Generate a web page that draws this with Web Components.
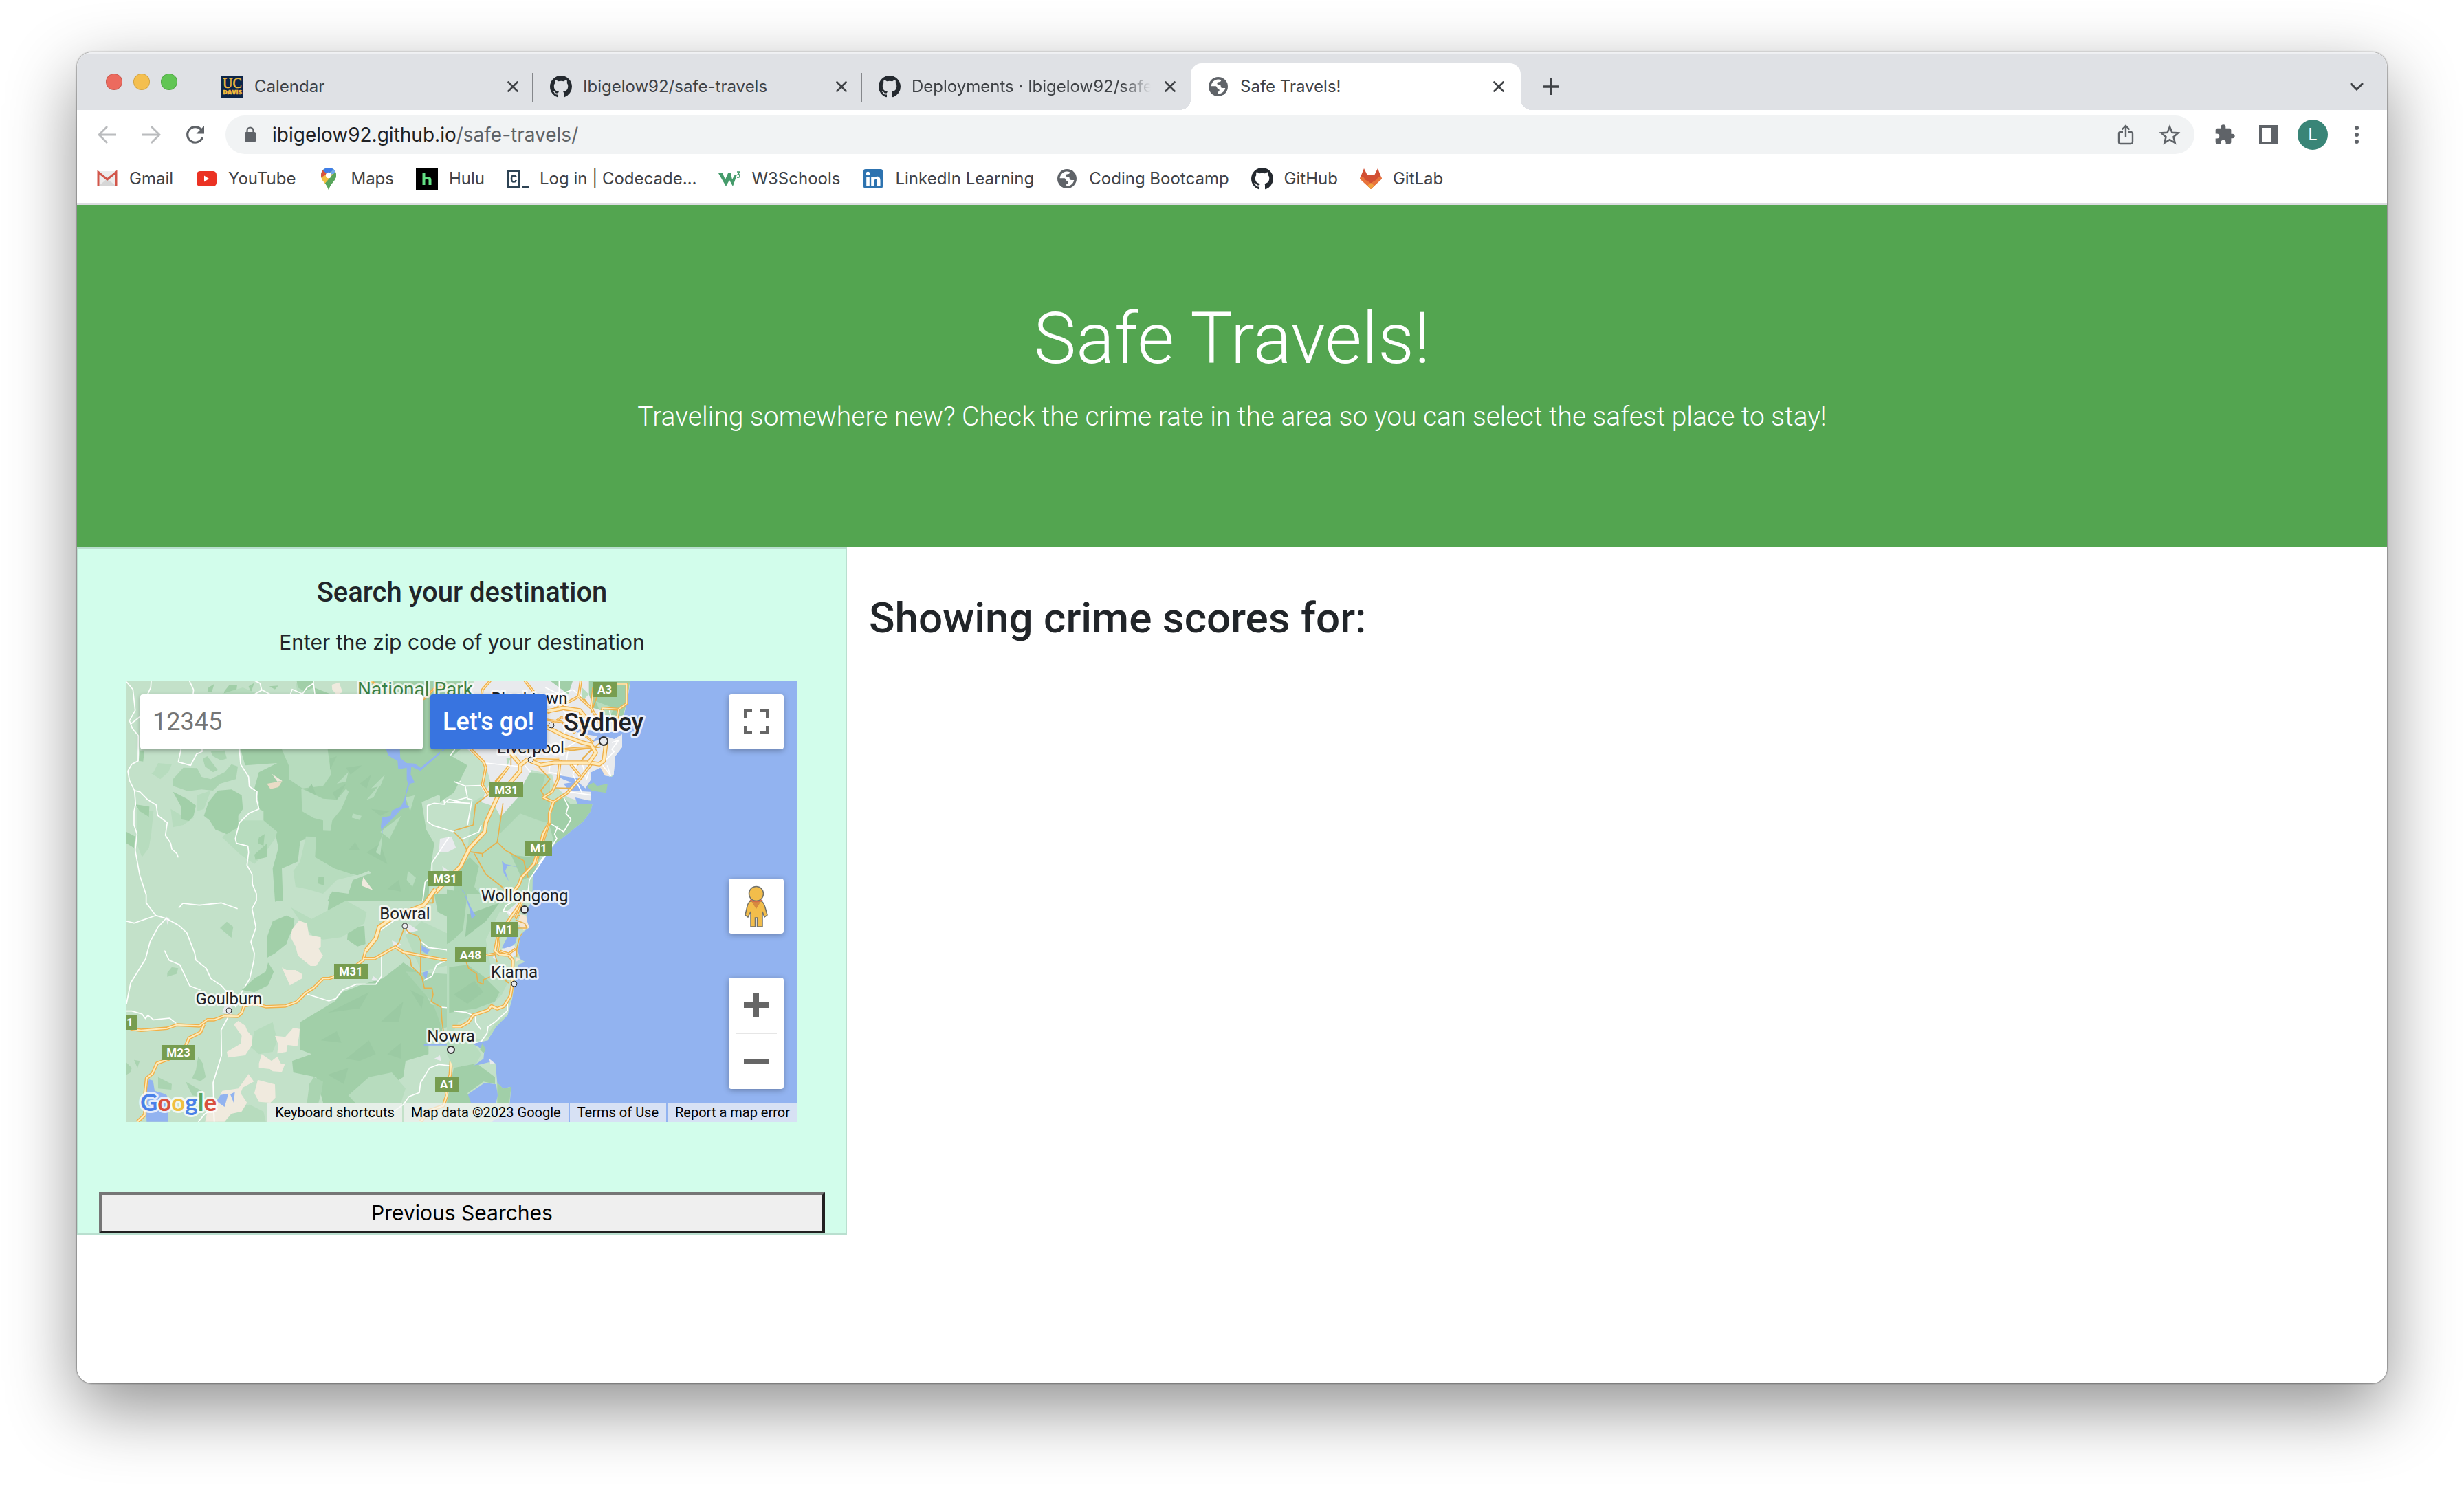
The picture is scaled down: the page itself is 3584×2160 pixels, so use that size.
<!DOCTYPE html>
<html lang="en">
<head>
<meta charset="utf-8">
<title>Safe Travels!</title>
<style>
  html, body { margin: 0; background: #fff; }
  body { box-sizing: border-box; min-height: 100vh; padding: 76px 112px 148px; display: flex; font-family: Inter, "Liberation Sans", sans-serif; color: #212529; }
</style>
</head>
<body>
<browser-window>
  <tab-strip slot="tabs">
    <browser-tab icon="davis">Calendar</browser-tab>
    <browser-tab icon="github">Ibigelow92/safe-travels</browser-tab>
    <browser-tab icon="github" last>Deployments · Ibigelow92/safe-travels</browser-tab>
    <browser-tab icon="globe" active>Safe Travels!</browser-tab>
  </tab-strip>
  <address-bar slot="toolbar" host="ibigelow92.github.io" path="/safe-travels/"></address-bar>
  <bookmark-bar slot="bookmarks">
    <bookmark-link icon="gmail">Gmail</bookmark-link>
    <bookmark-link icon="youtube">YouTube</bookmark-link>
    <bookmark-link icon="maps">Maps</bookmark-link>
    <bookmark-link icon="hulu">Hulu</bookmark-link>
    <bookmark-link icon="codecademy">Log in | Codecade…</bookmark-link>
    <bookmark-link icon="w3">W3Schools</bookmark-link>
    <bookmark-link icon="linkedin">LinkedIn Learning</bookmark-link>
    <bookmark-link icon="globe">Coding Bootcamp</bookmark-link>
    <bookmark-link icon="github">GitHub</bookmark-link>
    <bookmark-link icon="gitlab">GitLab</bookmark-link>
  </bookmark-bar>
  <site-hero>
    <span slot="title">Safe Travels!</span>
    Traveling somewhere new? Check the crime rate in the area so you can select the safest place to stay!
  </site-hero>
  <page-columns>
    <search-panel slot="side"><area-map></area-map></search-panel>
    <crime-results>Showing crime scores for:</crime-results>
  </page-columns>
</browser-window>

<script>
const define = (name, build) => customElements.define(name, class extends HTMLElement {
  connectedCallback() {
    if (this.shadowRoot) return;
    this.attachShadow({ mode: 'open' }).innerHTML = build(this);
  }
});

/* ---------- icons ---------- */
const octocat = '<path fill="#24292f" d="M8 0C3.58 0 0 3.58 0 8c0 3.54 2.29 6.53 5.47 7.59.4.07.55-.17.55-.38 0-.19-.01-.82-.01-1.49-2.01.37-2.53-.49-2.69-.94-.09-.23-.48-.94-.82-1.13-.28-.15-.68-.52-.01-.53.63-.01 1.08.58 1.23.82.72 1.21 1.87.87 2.33.66.07-.52.28-.87.51-1.07-1.78-.2-3.64-.89-3.64-3.95 0-.87.31-1.59.82-2.15-.08-.2-.36-1.02.08-2.12 0 0 .67-.21 2.2.82.64-.18 1.32-.27 2-.27s1.36.09 2 .27c1.53-1.04 2.2-.82 2.2-.82.44 1.1.16 1.92.08 2.12.51.56.82 1.27.82 2.15 0 3.07-1.87 3.75-3.65 3.95.29.25.54.73.54 1.48 0 1.07-.01 1.93-.01 2.2 0 .21.15.46.55.38A8.01 8.01 0 0 0 16 8c0-4.42-3.58-8-8-8z"/>';
const icons = {
  davis: ['0 0 32 32', '<rect width="32" height="32" fill="#0c2549"/><text x="16" y="18" text-anchor="middle" font-family="Liberation Serif, serif" font-size="20" fill="#f2bd3d" stroke="#f2bd3d" stroke-width=".5">UC</text><text x="16" y="27" text-anchor="middle" font-family="Open Sans, sans-serif" font-weight="800" font-size="9" fill="#f2bd3d" stroke="#f2bd3d" stroke-width=".4">DAVIS</text>'],
  github: ['0 0 16 16', octocat],
  globe: ['0 0 32 32', '<circle cx="16" cy="16" r="14" fill="#5f6368"/><path fill="#fff" d="M16 5.500c1.500 0 3 .3 4.300.9-.2 1.700-1.200 2.700-3 2.900-1.900.2-2.900.5-2.900 2.200 0 1.200.9 1.500 2.300 1.500 2.600 0 3.100 1.300 3.100 3.100 0 1.400.9 1.900 2.900 1.900h3.600C25.300 23 21.100 26.500 16 26.500l-.9-.1v-2.900c1.700-.1 2.600-.9 2.600-2.300 0-1.200-.7-1.900-2-2.200-1-.3-1.300-.8-1.500-1.700-.3-1.500-1.200-2.100-2.800-2.100H5.600C6.100 9.800 10.500 5.500 16 5.500z"/>'],
  gmail: ['0 0 32 32', '<rect x="3" y="5" width="26" height="21" fill="#ececec"/><path d="M4 26l12-10 12 10z" fill="#d6d6d6"/><path d="M3 26V6.500L16 17 29 6.500V26" fill="none" stroke="#d2564a" stroke-width="3"/>'],
  youtube: ['0 0 32 32', '<rect x="2" y="5" width="29" height="22" rx="5" fill="#eb3223"/><path d="M13 11.500v9l7-4.500z" fill="#fff"/>'],
  maps: ['0 0 32 32', '<path d="M16 0C9.500 0 5 5 5 11c0 8 8 11 11 21 3-10 11-13 11-21C27 5 22.500 0 16 0z" fill="#58a55c"/><path d="M16 0c-3.500 0-6.500 1.500-8.500 3.800L16 11l7-9C21 .8 18.800 0 16 0z" fill="#3f7de8"/><path d="M7.500 3.800A11 11 0 0 0 5 11c0 1 .2 2 .4 3L16 11z" fill="#d85140"/><path d="M5.400 14c.8 3.500 3 6 5.400 9L24.500 7 23 4z" fill="#f1bf42"/><path d="M23 2c2.600 2 4 5.500 4 9 0 8-8 11-11 21-1.200-4-3-6.600-5.200-9L24 8z" fill="#58a55c"/><path d="M23 2l-7 9 8-2.500 1.500-3.500A12 12 0 0 0 23 2z" fill="#6fa7f0"/><circle cx="16" cy="11" r="4.200" fill="#fff"/>'],
  hulu: ['0 0 32 32', '<rect width="32" height="32" fill="#000"/><path d="M11.500 7v18M11.500 25v-7c0-2 1-3 2.500-3h3.500c2 0 3 1 3 3v7" fill="none" stroke="#63e084" stroke-width="4"/>'],
  codecademy: ['0 0 32 32', '<rect x="1.500" y="4.500" width="17" height="23" fill="#fff" stroke="#2d4354" stroke-width="3"/><path d="M13.500 14c0-2-1-2.500-3.300-2.500s-3.200 1-3.200 4.500.9 4.500 3.200 4.500 3.300-.5 3.300-2.500" fill="none" stroke="#2d4354" stroke-width="2.600"/><rect x="23" y="26" width="9" height="3" fill="#2d4354"/>'],
  w3: ['0 0 32 32', '<path d="M0 8h6l4 9 4-9h4l2 9 4-7 3 0-6 17-5-9-5 9z" fill="#459b6b"/><path d="M27 6h4l-2.500 3.500c2 0 2.500 1 2.500 2.500s-1 2.500-4 2" fill="none" stroke="#459b6b" stroke-width="1.500"/>'],
  linkedin: ['0 0 32 32', '<rect x="2" y="2" width="28" height="28" rx="3" fill="#2d73b0"/><circle cx="8.500" cy="8.500" r="2.700" fill="#fff"/><path fill="#fff" d="M6.200 13h4.600v13H6.200zM13.200 13h4.300v1.900c.8-1.300 2.200-2.200 4.200-2.200 3.800 0 4.800 2.500 4.800 6V26h-4.600v-6.300c0-1.800-.4-3-2-3s-2.200 1.200-2.200 3V26h-4.500z"/>'],
  gitlab: ['0 0 32 32', '<path d="M6 1L0 16l16 15 16-15L26 1l-5 10H11z" fill="#d24f33"/><path d="M0 16l16 15L5 13H1z" fill="#e8743c"/><path d="M32 16L16 31l11-18h4z" fill="#e8743c"/><path d="M3 15l13 7 13-7-13 16z" fill="#e8743c"/><path d="M4 11l12 12L28 11 22 10H10z" fill="#d24f33"/><path d="M11 26l5-4 5 4-5 5z" fill="#f0a13f"/>'],
  close: ['0 0 16 16', '<path d="M1.500 1.500l13 13M14.500 1.500l-13 13" stroke="#3f4246" stroke-width="2.600" fill="none" stroke-linecap="round"/>'],
  plus: ['0 0 24 24', '<path d="M12 1.500v21M1.500 12h21" stroke="#3f4246" stroke-width="3.600" fill="none" stroke-linecap="round"/>'],
  chevron: ['0 0 20 12', '<path d="M2 2l8 8 8-8" stroke="#3f4246" stroke-width="3" fill="none" stroke-linecap="round"/>'],
  back: ['0 0 32 32', '<path d="M29 16H4M16 4L4 16l12 12" stroke="#babcbe" stroke-width="2.800" fill="none"/>'],
  forward: ['0 0 32 32', '<path d="M3 16h25M16 4l12 12-12 12" stroke="#babcbe" stroke-width="2.800" fill="none"/>'],
  reload: ['0 0 32 32', '<path d="M26.500 20A11.300 11.300 0 1 1 24.500 8.500" stroke="#5f6368" stroke-width="3.200" fill="none"/><path d="M29 3v11.500H17.500z" fill="#5f6368"/>'],
  lock: ['0 0 32 32', '<rect x="8" y="12" width="16" height="15" rx="2" fill="#5f6368"/><path d="M11.500 13v-3a4.500 4.500 0 0 1 9 0v3" fill="none" stroke="#5f6368" stroke-width="2.200"/>'],
  share: ['0 0 32 32', '<path d="M12 12H8.500a2.500 2.500 0 0 0-2.500 2.500v12A2.500 2.500 0 0 0 8.500 29h15a2.500 2.500 0 0 0 2.500-2.500v-12a2.500 2.500 0 0 0-2.500-2.500H20M16 20V4M10.500 8.500L16 3l5.500 5.500" fill="none" stroke="#5f6368" stroke-width="2.400"/>'],
  star: ['0 0 32 32', '<path d="M16 4.500l3.400 8.200 8.800.7-6.700 5.800 2.100 8.600-7.600-4.600-7.600 4.600 2.100-8.600-6.700-5.800 8.800-.7z" fill="none" stroke="#5f6368" stroke-width="2.600"/>'],
  puzzle: ['0 0 24 24', '<path fill="#5f6368" d="M20.500 11H19V7c0-1.100-.9-2-2-2h-4V3.500a2.500 2.500 0 0 0-5 0V5H4c-1.100 0-2 .9-2 2v3.800h1.500a2.700 2.700 0 0 1 0 5.400H2V20c0 1.100.9 2 2 2h3.800v-1.500a2.700 2.700 0 0 1 5.400 0V22H17c1.100 0 2-.9 2-2v-4h1.500a2.500 2.500 0 0 0 0-5z"/>'],
  panel: ['0 0 32 32', '<path fill="#5f6368" fill-rule="evenodd" d="M2 2h28v28H2zM6 6v20h14V6z"/>'],
  dots: ['0 0 32 32', '<g fill="#5f6368"><circle cx="16" cy="6" r="3"/><circle cx="16" cy="16" r="3"/><circle cx="16" cy="26" r="3"/></g>'],
  fullscreen: ['0 0 36 36', '<path fill="#666" d="M0 0h12v4H4v8H0zM24 0h12v12h-4V4h-8zM0 24h4v8h8v4H0zM32 24h4v12H24v-4h8z"/>'],
  zoomin: ['0 0 36 36', '<path fill="#666" d="M14 0h8v14h14v8H22v14h-8V22H0v-8h14z"/>'],
  zoomout: ['0 0 36 36', '<path fill="#666" d="M0 14h36v8H0z"/>'],
  pegman: ['0 0 36 60', '<path d="M9 23q-3 2-4.500 9L2 43l4 3 4-8v22h6.500V47h3V60H27V38l3 8 4-3-3-11q-2-7-5-9z" fill="#f2bd4b" stroke="#71716a" stroke-width="1.500"/><path d="M11 23h14l-7 11z" fill="#d68a3f"/><circle cx="18" cy="12" r="10.500" fill="#f2bd4b" stroke="#71716a" stroke-width="1.500"/><path d="M9 21q9 5 18 0" fill="none" stroke="#d2694a" stroke-width="2"/>']
};
customElements.define('ui-icon', class extends HTMLElement {
  connectedCallback() {
    if (this.shadowRoot) return;
    const [box, art] = icons[this.getAttribute('name')];
    this.attachShadow({ mode: 'open' }).innerHTML = `
      <style>:host{display:block;flex:none;width:32px;height:32px}svg{display:block;width:100%;height:100%}</style>
      <svg viewBox="${box}" aria-hidden="true">${art}</svg>`;
  }
});

const button = 'button{font:inherit;color:inherit;border:0;padding:0;margin:0;background:none;display:block;flex:none}';

/* ---------- browser frame ---------- */
define('browser-window', () => `
  <style>
    :host{display:flex;flex:1;min-width:0;border-radius:22px;box-shadow:0 0 2px 1px rgba(0,0,0,.35),0 36px 100px rgba(0,0,0,.44)}
    .frame{flex:1;min-width:0;display:flex;flex-direction:column;overflow:hidden;border-radius:22px;background:#fff}
    header{border-bottom:2px solid #dcdde1}
    main{flex:1}
  </style>
  <div class="frame">
    <header><slot name="tabs"></slot><slot name="toolbar"></slot><slot name="bookmarks"></slot></header>
    <main><slot></slot></main>
  </div>`);

define('tab-strip', () => `
  <style>
    ${button}
    :host{display:flex;align-items:flex-end;box-sizing:border-box;height:84px;background:#dfe1e5;box-shadow:inset 0 2px 1px #f0f1f3}
    .lights{display:flex;gap:16px;align-self:flex-start;box-sizing:border-box;width:186px;flex:none;padding:31px 0 0 42px}
    .lights button{width:24px;height:24px;border-radius:50%;box-shadow:inset 0 0 0 1px rgba(0,0,0,.14)}
    .new,.more{height:68px;display:flex;align-items:center}
    .new{margin-left:32px}.new ui-icon{width:24px;height:24px}
    .more{margin-left:auto;margin-right:34px}.more ui-icon{width:20px;height:12px}
  </style>
  <div class="lights">
    <button aria-label="Close window" style="background:#ec6a5e"></button>
    <button aria-label="Minimize" style="background:#f4bf4f"></button>
    <button aria-label="Zoom" style="background:#61c554"></button>
  </div>
  <slot></slot>
  <button class="new" aria-label="New tab"><ui-icon name="plus"></ui-icon></button>
  <button class="more" aria-label="Search tabs"><ui-icon name="chevron"></ui-icon></button>`);

define('browser-tab', el => `
  <style>
    ${button}
    :host{position:relative;display:flex;align-items:center;box-sizing:border-box;flex:0 1 478px;min-width:0;height:68px;padding:0 20px 0 24px;font-size:24px;line-height:32px;color:#3f4246;border-right:2px solid #85878b;border-image:linear-gradient(transparent 15px,#85878b 15px,#85878b 55px,transparent 55px) 1}
    :host([last]){border-color:transparent;border-image:none}
    :host([active]){flex-basis:480px;padding-right:24px;border:0;background:#fff;border-radius:16px 16px 0 0}
    :host([active])::before,:host([active])::after{content:"";position:absolute;bottom:0;width:16px;height:16px}
    :host([active])::before{right:100%;background:radial-gradient(circle at 0 0,transparent 16px,#fff 16px)}
    :host([active])::after{left:100%;background:radial-gradient(circle at 100% 0,transparent 16px,#fff 16px)}
    .title{flex:1;min-width:0;margin:0 20px 0 16px;overflow:hidden;white-space:nowrap}
    :host([last]) .title{-webkit-mask-image:linear-gradient(90deg,#000 88%,transparent);mask-image:linear-gradient(90deg,#000 88%,transparent)}
    button ui-icon{width:16px;height:16px}
  </style>
  <ui-icon name="${el.getAttribute('icon')}"></ui-icon>
  <span class="title"><slot></slot></span>
  <button aria-label="Close tab"><ui-icon name="close"></ui-icon></button>`);

define('address-bar', el => `
  <style>
    ${button}
    :host{display:flex;align-items:center;height:56px;padding:8px 28px 0;gap:32px;background:#fff}
    .field{flex:1;min-width:0;display:flex;align-items:center;box-sizing:border-box;height:56px;margin:0 -4px;padding:0 20px;border-radius:28px;background:#f1f3f4;font-size:28px;line-height:36px;color:#5f6368}
    .url{flex:1;margin-left:16px;white-space:nowrap}
    b{font-weight:400;color:#202124}
    .star{margin-left:32px}
    .avatar{width:44px;height:44px;margin:0 -6px;border-radius:50%;background:#398577;color:#fff;font-size:24px;line-height:44px;text-align:center}
  </style>
  <button aria-label="Back"><ui-icon name="back"></ui-icon></button>
  <button aria-label="Forward"><ui-icon name="forward"></ui-icon></button>
  <button aria-label="Reload"><ui-icon name="reload"></ui-icon></button>
  <div class="field">
    <ui-icon name="lock"></ui-icon>
    <div class="url" role="textbox" aria-label="Address"><b>${el.getAttribute('host')}</b>${el.getAttribute('path')}</div>
    <button aria-label="Share"><ui-icon name="share"></ui-icon></button>
    <button class="star" aria-label="Bookmark"><ui-icon name="star"></ui-icon></button>
  </div>
  <button aria-label="Extensions"><ui-icon name="puzzle"></ui-icon></button>
  <button aria-label="Side panel"><ui-icon name="panel"></ui-icon></button>
  <button class="avatar" aria-label="Profile">L</button>
  <button aria-label="Menu"><ui-icon name="dots"></ui-icon></button>`);

define('bookmark-bar', () => `
  <style>:host{display:flex;align-items:center;height:72px;padding:0 28px;gap:32px;background:#fff}</style><slot></slot>`);
define('bookmark-link', el => `
  <style>
    :host{display:block;flex:none}
    a{display:flex;align-items:center;gap:16px;color:#3f4246;text-decoration:none;font-size:24px;line-height:32px;white-space:nowrap}
  </style>
  <a href="#"><ui-icon name="${el.getAttribute('icon')}"></ui-icon><slot></slot></a>`);

/* ---------- page ---------- */
define('site-hero', () => `
  <style>
    :host{display:block;padding:128px 64px;background:#53a550;color:#fff;text-align:center;font-family:Roboto,sans-serif;font-weight:300}
    h1{margin:0 0 16px;font-size:104px;line-height:134px;font-weight:300}
    p{margin:0 0 32px;font-size:39px;line-height:60px}
  </style>
  <h1><slot name="title"></slot></h1><p><slot></slot></p>`);

define('page-columns', () => `
  <style>:host{display:flex;align-items:flex-start}.side{flex:0 0 33.333%;min-width:0}.rest{flex:1;min-width:0}</style>
  <div class="side"><slot name="side"></slot></div><div class="rest"><slot></slot></div>`);

define('search-panel', () => `
  <style>
    :host{display:block;border:2px solid #b9dfcf;background:#d2fdeb;text-align:center}
    .body{padding:40px 70px 102px}
    h2{margin:0 0 24px;font:500 40px/48px Roboto,sans-serif}
    p{margin:0 0 32px;font-size:30px;line-height:48px}
    button{display:block;box-sizing:border-box;width:calc(100% - 60px);margin:0 30px;padding:4px;border:4px solid;border-color:#767676 #212121 #212121 #767676;background:#efefef;color:#000;font:400 30px/44px Inter,sans-serif}
  </style>
  <div class="body"><h2>Search your destination</h2><p>Enter the zip code of your destination</p><slot></slot></div>
  <button>Previous Searches</button>`);

define('crime-results', () => `
  <style>:host{display:block;padding:64px 32px}h2{margin:0;font:500 62px/78px Roboto,sans-serif}</style>
  <h2><slot></slot></h2>`);

/* ---------- map ---------- */
const road = (d, w) => `<path d="${d}" fill="none" stroke="#f0b049" stroke-width="${w}"/><path d="${d}" fill="none" stroke="#ffeab9" stroke-width="${w - 8}"/>`;
const thin = d => `<path d="${d}" fill="none" stroke="#e8b04c" stroke-width="5"/>`;
const white = d => `<path d="${d}" fill="none" stroke="#fff" stroke-width="5"/>`;
const area = (c, d) => `<path fill="${c}" d="${d}"/>`;
const F = '#a1cfa8', M = '#b7dcbe', D = '#aad4b1', S = '#f0eade', U = '#e8eaed', W = '#92b3f0', K = '#9bcaa3';
const shield = (x, y, w, t) => `<rect x="${x}" y="${y}" width="${w}" height="22" fill="#779d50"/><text x="${x + w / 2}" y="${y + 17}" text-anchor="middle" fill="#fff" font-size="17" font-weight="700">${t}</text>`;
const place = (x, y, t) => `<text class="halo" x="${x}" y="${y}" text-anchor="middle" font-size="24" fill="#202124">${t}</text>`;
const dot = (x, y, r) => `<circle cx="${x}" cy="${y}" r="${r}" fill="#e8eaed" stroke="#333" stroke-width="${r > 4 ? 2 : 1}"/>`;

customElements.define('map-drawing', class extends HTMLElement {
  connectedCallback() {
    if (this.shadowRoot) return;
    const nw = [
      area(F, 'M1110 30H1500V480L1440 540 1400 530 1330 560 1350 680 1385 740 1365 880 1360 990H920L940 950 1010 960 1030 900 1110 870 1100 860 1050 880 960 860 870 810 830 720 800 730 790 820 720 850 725 990H690L680 850 705 760 690 690 640 650 640 600 620 590 620 560 600 500 620 430 700 390 560 400 540 330 1000 330 1080 90z'),
      area(M, 'M720 330H920L935 440 900 490 810 500 750 460 750 400z'),
      area(M, 'M805 500L900 545 960 550 1000 502 1012 515 980 590 940 640 932 686 900 685 900 640 860 630 808 600z'),
      area(M, 'M525 640L640 640 700 690 690 720 640 790 600 830 540 790 460 715z'),
      area(M, 'M825 710L870 712 865 800 950 850 1040 880 960 900 900 960 830 940 780 930 770 860 800 820z'),
      area(F, 'M400 560L440 510 500 505 545 530 550 590 530 620 530 670 480 700 430 680 405 640 380 620z'),
      area(D, 'M245 460L290 410 350 412 370 450 410 460 470 430 500 395 528 405 520 460 450 480 420 510 370 505 310 512 245 490z'),
      area(M, 'M160 430L180 390 240 395 225 430 190 460 150 435zM90 590L160 600 150 700 140 760 110 800 90 750zM235 590L285 620 340 625 290 660 245 670zM350 530L410 510 380 590 350 600z'),
      area(D, 'M375 370L395 360 440 420 420 430 385 405zM410 340L470 335 480 370 455 378 420 360z'),
      area(F, 'M245 515L305 545 345 575 335 620 315 642 280 635 280 580zM80 570L142 580 140 625 100 600zM100 335L120 335 115 383 96 380zM42 690L80 710 75 760 42 740zM600 790L655 740 655 800 605 812zM620 715L645 700 640 750 615 740zM880 885L905 885 905 925 878 915zM490 50L525 50 520 85 465 95 470 75zM400 60L425 45 415 78 395 80zM575 55L600 40 585 82zM665 55L705 52 690 68z'),
      area(M, 'M450 90L550 60 620 90zM780 40L860 38 860 90H790z'),
      area(F, 'M785 32H860V60L820 78 790 60zM860 60L960 100H860z'),
      area(K, 'M930 370L960 360 930 420zM1000 410L1070 400 1020 440zM830 510L850 480 870 530zM1110 590L1190 600 1150 620zM1010 770L1040 735 1060 770zM1090 780L1150 740 1180 830zM1180 940L1230 900 1240 950zM940 520L1000 480 960 550zM1060 480L1110 440 1090 500z'),
      area(M, 'M1090 550L1150 480 1120 540zM1030 610L1068 620 1060 638 1025 628zM1150 690L1240 620 1190 720zM1260 540L1300 530 1280 600zM960 480L1010 430 1000 470zM1110 500L1170 440 1150 490zM1130 780L1160 700 1150 790zM1270 860L1305 890 1290 930 1265 900z'),
      area(S, 'M938 48L970 38 985 80 960 92 940 70zM677 437L722 468 700 470zM1075 888L1118 945 1068 925z'),
      area('#e9dcc6', 'M655 480L722 468 705 495 670 503z'),
      area('#c3e1c9', 'M1440 380L1500 330V870L1440 900 1375 940 1370 880 1390 720 1355 640 1335 565 1400 570 1430 530z'),
      area(U, 'M1410 720L1460 710 1480 760 1440 780 1405 780zM1420 840L1450 860 1430 880z'),
      area(W, 'M1175 330H1235L1237 368 1265 390 1300 392 1325 410 1420 332 1432 330 1325 424 1285 405 1282 440 1300 475 1278 480 1262 530 1262 570 1277 582 1240 592 1215 620 1185 650 1160 675 1159 700 1152 668 1157 628 1195 620 1200 597 1240 580 1255 545 1270 480 1265 460V410L1228 417 1225 380 1185 358z'),
      white('M42 35L70 68 80 160 55 205 68 240 94 270 93 380 65 395 48 425 55 465 77 510 82 570 75 600V660L88 700 80 770 100 880 128 965V1000L170 1055 215 1068'),
      white('M60 220L110 180M150 30L148 60 132 95M316 30L335 70 332 95M600 30L625 42 632 70 670 90M632 72L600 90M755 95L765 68 810 88 830 60 858 42V30M858 42L865 95'),
      white('M77 510L100 515 135 550 172 573 178 618 220 650 212 705 235 740 240 765 262 785 268 802'),
      white('M535 330L540 395 575 450 578 492 612 515 610 550 620 590 578 608 535 650 517 720 522 740 572 752 575 780 568 835 590 875 592 920 609 960V990L590 1025 607 1108 585 1170 600 1220 598 1250 580 1330 545 1390 530 1430'),
      white('M280 330L268 385 322 400 348 350 372 340V330'),
      white('M1475 330L1435 385 1420 490 1430 570 1385 565 1355 575V645L1380 662 1470 690M1430 435L1480 475 1500 470M1430 565L1450 548 1500 560M1450 712L1375 825V880L1345 910 1335 990'),
      road('M1108 30L1180 90 1340 110 1390 60 1440 60', 10)
    ].join('');
    const sw = [
      area(F, 'M655 190L680 120 740 95 775 110 770 150 750 190 740 220 690 260 655 280zM920 70L930 0H1010L1000 60 940 95zM1010 150L1080 140 1085 220 1050 230 1005 200zM690 0H725L720 25 690 35zM545 420L600 370 650 340 660 300 685 340 660 400 600 430zM1385 0H1500V130L1400 80z'),
      area(M, 'M760 60L850 110 1000 30 1090 80 1080 130 980 190 900 200 860 190 800 120zM1260 180L1330 120 1500 200V300L1330 340z'),
      area(D, 'M450 150L480 122 508 145 500 192zM220 345L240 320 268 325 260 350 220 362zM345 770L355 710 375 740 388 800 365 818 328 805zM180 800L240 830 238 855 180 850zM300 820L370 860 380 890 330 880zM75 725L100 730 90 760zM40 735L65 760 60 780 42 790z'),
      area(F, 'M800 560L950 470 985 430 1060 400 1160 370 1250 300 1310 340 1340 420 1370 480 1410 500 1420 600 1360 630 1360 700 1260 730 1250 800 1200 830 1160 880 1100 912H900L870 800 770 780 765 730 850 700 800 680z'),
      area(D, 'M860 800L900 820 895 860 880 912H830L840 830zM1260 340L1440 350 1500 420V560L1420 590 1380 480z'),
      area(K, 'M920 520L1100 430 1060 500zM1000 720L1100 640 1130 700 1060 730zM1150 560L1250 470 1230 560zM890 640L960 600 980 650zM1180 700L1240 650 1240 720zM1280 420L1340 450 1330 500zM920 790L1010 760 990 830z'),
      area(M, 'M600 600L680 560 700 640 680 690 620 700 585 670zM1010 880L1100 800 1200 780 1260 850 1240 912H1040zM500 930L580 920 640 950 650 995H440z'),
      area(S, 'M795 117L830 130 838 180 890 190 890 230 880 240 900 270 870 315 845 315 790 270 780 230 758 190 765 155zM720 322L740 333 780 333 808 350 808 370 755 400zM510 570L530 555 560 575 570 600 588 620 590 660 560 705 485 715 480 690 540 655 545 620zM690 620L735 625 770 585 798 590 795 620 788 665 745 660 740 690 700 697 705 660zM620 740L632 700 675 730 700 710 715 740 733 745 720 778 680 775 668 765 620 760zM615 812L690 832 692 890 670 912 620 908 600 870zM435 912L460 860 530 850 575 787 598 820 550 845 540 870 568 912 545 950 500 960 470 995H385L400 930z'),
      area(U, 'M470 490L500 485 500 530 460 520zM1200 205L1240 220 1215 245zM1270 130L1315 160 1260 175zM1120 360L1145 380 1110 378zM1410 705L1415 730 1385 720zM1465 690L1500 670V720L1465 725zM215 100L230 110 220 135z'),
      area(W, 'M140 810L158 815 165 860 215 875 228 900 222 995H130L125 880zM435 905L452 878 487 872 470 930zM495 875L515 865 510 912zM1330 225L1365 245 1355 265 1330 250zM1333 345L1358 335 1350 378zM1340 655H1460V662H1340z'),
      white('M42 120L75 128 170 95M215 108L180 145 145 210 125 285 60 390 42 480M215 108L270 138 305 170 340 260 345 290 390 325 410 370 455 400 490 440 520 495'),
      white('M208 248L228 290 275 310 318 402 365 420M270 62L288 42 360 50 455 40 527 65M485 540L455 595 457 705 420 825 425 995M420 940L385 960 355 995M42 512L65 512 110 525 125 545 135 530 160 550 230 543 262 568'),
      white('M830 438L925 468 955 458 985 420 1045 395 1130 395 1155 360V270M1150 160L1220 110M1328 210L1360 235 1440 245 1450 285M1430 295L1395 310 1375 360 1340 378M1415 495L1450 498 1500 515'),
      white('M1455 750L1405 745 1365 760 1325 825 1320 868 1275 885 1250 920 1215 945 1190 960 1100 985'),
      thin('M1257 140L1230 215 1215 232M1257 150L1275 170 1315 185 1327 210 1325 350M1250 255L1280 285 1285 315 1330 360 1342 412 1375 412 1380 440 1372 470 1415 495 1418 550 1425 600M1350 40L1380 40V10'),
      road('M60 590L105 596 220 587 262 572 360 577 395 550 425 550 470 533 528 535 545 520 555 490 600 480 650 493 735 490 785 472 825 432 860 410 900 370 925 370 1010 340 1075 290 1085 250 1130 195', 14),
      road('M1085 250L1130 195 1145 145 1210 100 1340 50 1390 -20', 20),
      road('M1080 283H1125L1215 232 1250 255 1425 288 1500 280', 14),
      road('M380 570L365 605 315 630 300 665 230 720 175 740 155 785 130 805 123 870 122 965 90 995', 15),
      road('M1325 995L1365 945 1425 925 1440 880 1435 850 1455 790 1462 690 1465 600 1475 580 1500 578', 15)
    ].join('');
    const ne = [
      area(F, 'M-60 330L60 400 0 520-60 560z'),
      area(M, 'M80 560L300 440 420 440 420 650 440 740 345 880V990H0V860L60 780z'),
      area(D, 'M330 430L400 440 380 520 420 560 410 650 370 640 290 610 200 700 200 620z'),
      area(F, 'M0 870L70 800 110 840 90 930 140 990H0zM250 790L330 800 400 740 345 880 300 900z'),
      area(U, 'M90 30H790V330L700 440 600 470 600 550 560 560 500 540 440 490 430 440 340 420 310 470 280 540 205 625 180 580 120 560 160 470 140 400 60 330V100z'),
      area(F, 'M590 30H770L755 130 740 180 690 200 650 160 610 150 590 90zM420 30H520L500 90 460 60zM440 560L480 540 510 570 605 570 598 600 565 645 440 745 415 650z'),
      area(M, 'M620 120L700 150 680 190 640 170zM230 370L250 365 235 400zM560 60L590 90 560 120zM530 200L560 220 530 235z'),
      area('#f5e6d3', 'M640 400L690 400 680 445 650 440zM340 405L380 405 425 435 400 440z'),
      area(W, 'M772 30H1500V2000H160L170 1950 235 1920 245 1870 251 1802 215 1810 190 1785 182 1700 155 1695 85 1712 130 1680 133 1650 110 1630 80 1615 150 1600 160 1580 185 1540 235 1490 255 1420 265 1360 275 1310 280 1270 312 1258 290 1245 280 1210 290 1150 305 1125 330 1108 320 1080 318 1030 343 990 345 880 400 795 440 745 565 645 598 600 605 570H540L530 540 598 555 600 515 500 510 480 480 540 470 575 500 600 460 600 430 640 410 660 445 690 450 698 440 705 360 735 320V265L700 285 670 275 600 300 640 260 735 250 745 170 755 130z'),
      area(W, 'M480 240L640 250 640 275 560 262zM440 440L560 460 530 480 480 462zM210 815L225 830 280 843 235 838 225 860 240 905 218 870zM30 930L75 1020 95 1055 78 1070 70 1030z'),
      area(F, 'M580 490L610 475 625 490 672 480 665 520 600 510zM125 1612L140 1640 130 1655 115 1640z'),
      area(U, 'M675 310L735 265V320L705 360 698 440 680 450 660 400zM155 1680L180 1700 160 1705z'),
      white('M400 60L460 90 520 70 560 100M470 150L520 210 480 260 530 300 480 330M600 200L620 240 650 230M670 400L685 445 650 400M690 300L720 290 690 330 700 340 660 380M680 160L690 210M420 400L415 430 470 440M500 330L490 390 530 400M560 390L580 460 590 430M500 515L600 530M460 30V80L420 100M340 120H400M560 240L600 230 640 240M540 380L520 440 560 520M140 390L290 405M335 430L310 400'),
      white('M480 540L500 580 490 610 512 635 480 690 425 655M455 665L440 700 450 720 430 750 370 830M400 795L330 900 320 990M0 470L50 490 60 540 0 555M50 490L120 488 140 520M60 545L80 550 60 660M120 660L110 690 35 722M-30 560L70 565'),
      thin('M0 685L85 660 95 570 150 530M0 690L35 725 60 775 125 785 190 735 215 565M190 735L225 770 305 815 325 890M90 785L140 875 210 930 240 970M125 785V800'),
      thin('M370 405L420 460 380 510 400 540M440 498L510 500M470 340L640 320M510 390L560 460M600 170L640 60M570 110L620 180M240 405L180 470M250 340V400M600 330L540 400M640 300L560 370'),
      road('M160 30L125 70 120 110M310 30L350 80M555 30L545 100 410 170M545 100L600 150 640 220M600 150L610 60M710 45H755V130L720 155 650 150 640 190M720 155L710 220', 12),
      road('M75 330L130 385 140 410 125 485 150 525 240 405', 13),
      road('M400 200L470 210 530 260M410 230L470 190 600 230M550 160L560 260 610 300M470 330L600 320M335 375L460 370', 10),
      road('M465 375L455 460 430 515 390 540 435 560 495 520 550 460 600 395M510 395L550 445', 13),
      road('M435 560L418 610V650L390 700 380 740 350 830 295 890 285 920 265 945 285 1020', 15),
      road('M418 650L395 720 370 790 360 830', 10),
      road('M-85 960L30 840 70 760 135 690 140 650 190 540 290 425V395L240 335', 19),
      road('M290 400L320 375 380 398 440 388H590L635 395 655 380 665 300', 19),
      road('M400 165L480 150 550 160 575 190M410 235L480 270 560 300 600 310 620 345 590 388', 19)
    ].join('');
    const se = [
      area(M, 'M-30 0H320L340 20 260 80 200 200 180 270 250 300 260 400 235 530 160 620 85 650 120 700 100 740 0 760-30 700z'),
      area('#c3e1c9', 'M200 80L280 60 270 160 180 200 180 260 260 290 255 400 235 530 185 560 130 640 0 600 20 560 150 500 210 440 240 380 160 310 140 200z'),
      area(F, 'M-30 -20L60 0 40 160 0 200-30 220zM-20 320L60 310 130 360 200 430 180 470 100 500-20 520zM0 760L100 740 180 800 180 830 130 820 60 870 80 912H-30zM190 820L215 850 251 842 243 912H190z'),
      area(K, 'M60 90L200 40 140 120 50 190zM0 440L90 380 130 430 60 480z'),
      area(W, 'M135 825L185 832 192 880 185 912H75L62 875z M210 235L245 170 285 150 270 215 235 245z'),
      area(W, 'M40-20L75 60 95 95 78 110 70 70z'),
      area(U, 'M215 240L265 225 280 260 255 280 190 265zM230 80L275 40 300 60 250 110zM180 255L190 290 170 280z'),
      area('#f5e6d3', 'M290 90L315 95 330 148 305 160 280 130zM270 280L292 285 270 298z'),
      white('M215 75L230 50 250 40M215 75L240 80 260 95M0 512L55 518 95 535 95 560 118 592M235 480V510L180 560 150 580 145 610 120 645 90 652'),
      thin('M55 300L65 325 100 350 105 385 128 395 130 375 170 358M300 170L285 200 275 240 275 275M270 115L310 130 320 150 275 150M180 265L190 300M215 370L240 390M245 100L290 95'),
      road('M-5 580H30L65 560 85 530 150 508 165 490 190 502 220 490 248 445 255 400 258 290 240 268 200 265 180 250 192 190 245 110 290 45', 15),
      road('M130 270L180 262M192 190L200 250 240 262 270 240M300 30L270 110', 11)
    ].join('');
    this.attachShadow({ mode: 'open' }).innerHTML = `
      <style>
        :host{display:block}
        svg{display:block;width:100%;height:642px;font-family:Roboto,sans-serif}
        .halo{paint-order:stroke;stroke:rgba(255,255,255,.75);stroke-width:6px;stroke-linejoin:round}
        path{stroke-linejoin:round}
      </style>
      <svg viewBox="0 0 976 642" preserveAspectRatio="xMidYMid slice" role="img" aria-label="Map of the coast around Sydney">
        <rect width="976" height="642" fill="#c3e1c9"/>
        <g transform="translate(-14 -10) scale(.33333)">${nw}</g>
        <g transform="translate(476 -10) scale(.33333)">${ne}</g>
        <g transform="translate(-14 310) scale(.33333)">${sw}</g>
        <g transform="translate(476 310) scale(.33333)"><defs><clipPath id="land"><path d="M-40-20H318V60L320 120 330 148 305 165 290 190 280 250 290 285 312 298 280 310 275 350 265 400 255 460 235 530 185 580 160 620 150 640 80 655 110 670 133 690 130 720 85 750 155 735 182 740 190 825 215 850 251 842 245 910 200 1000H-40z"/></clipPath></defs><g clip-path="url(#land)">${se}</g></g>
        ${shield(678, 2, 35, 'A3')}${shield(528, 148, 49, 'M31')}${shield(580, 233, 39, 'M1')}${shield(439, 277, 49, 'M31')}
        ${shield(530, 351, 39, 'M1')}${shield(478, 388, 45, 'A48')}${shield(302, 412, 49, 'M31')}${shield(51, 530, 49, 'M23')}${shield(449, 576, 35, 'A1')}
        <rect y="486" width="16" height="22" fill="#779d50"/><text x="0" y="503" fill="#fff" font-size="17" font-weight="700">1</text>
        ${dot(588, 115, 4)}${dot(618, 65, 4)}${dot(694, 88, 6)}${dot(579, 333, 5)}${dot(564, 441, 4)}${dot(405, 357, 4)}${dot(149, 480, 4)}${dot(472, 537, 5)}
        <text class="halo" x="420" y="22" text-anchor="middle" font-size="28" fill="#3c8043">National Park</text>
        ${place(586, 34, 'Blacktown')}${place(588, 106, 'Liverpool')}${place(579, 321, 'Wollongong')}${place(564, 432, 'Kiama')}
        ${place(405, 347, 'Bowral')}${place(149, 471, 'Goulburn')}${place(472, 525, 'Nowra')}
        <text class="halo" x="694" y="73" text-anchor="middle" font-size="36" font-weight="500" fill="#202124">Sydney</text>
        <text class="halo" x="20" y="626" font-family="Lato" font-size="35" font-weight="700"><tspan fill="#4a80e8">G</tspan><tspan fill="#d9503f">o</tspan><tspan fill="#f1bf42">o</tspan><tspan fill="#4a80e8">g</tspan><tspan fill="#58a55c">l</tspan><tspan fill="#d9503f">e</tspan></text>
      </svg>`;
  }
});

define('area-map', () => `
  <style>
    ${button}
    :host{display:grid;overflow:hidden;font-family:Roboto,"Liberation Sans",sans-serif;text-align:left}
    map-drawing,.over{grid-area:1/1;min-width:0}
    .over{position:relative;display:flex;flex-direction:column}
    .row{display:flex;justify-content:space-between;padding:20px 20px 0;flex:1}
    form{display:flex;align-items:flex-start;gap:11px}
    input{box-sizing:border-box;width:411px;height:80px;margin:0;padding:0 18px;border:0;border-radius:4px;background:#fff;box-shadow:0 2px 6px rgba(0,0,0,.3);font:400 36px/44px Roboto,sans-serif;color:#333}
    input::placeholder{color:#757575;opacity:1}
    .go{height:80px;padding:0 18px;border-radius:4px;background:#3874e0;color:#fff;font-size:36px;font-weight:500;line-height:80px;box-shadow:0 2px 6px rgba(0,0,0,.3)}
    .controls{display:flex;flex-direction:column}
    .box{width:80px;border-radius:4px;background:#fff;box-shadow:0 2px 8px rgba(0,0,0,.3)}
    .box button{width:80px;height:80px;display:flex;align-items:center;justify-content:center}
    .box ui-icon{width:36px;height:36px}
    .box ui-icon.tall{height:60px}
    .peg{margin:188px 0 64px}
    hr{width:60px;height:2px;margin:0 10px;border:0;background:#e6e6e6}
    footer{display:flex;justify-content:flex-end;gap:2px;font-size:20px;line-height:28px;color:#000}
    footer>*{padding:0 11px;background:rgba(245,245,245,.7);color:inherit;text-decoration:none;white-space:nowrap}
    footer button{padding:0 11px;background:rgba(245,245,245,.7)}
  </style>
  <map-drawing></map-drawing>
  <div class="over">
    <div class="row">
      <form onsubmit="return false"><input type="text" placeholder="12345" aria-label="Zip code"><button class="go">Let's go!</button></form>
      <div class="controls">
        <div class="box"><button aria-label="Fullscreen"><ui-icon name="fullscreen"></ui-icon></button></div>
        <div class="box peg"><button aria-label="Street View"><ui-icon class="tall" name="pegman"></ui-icon></button></div>
        <div class="box"><button aria-label="Zoom in"><ui-icon name="zoomin"></ui-icon></button><hr><button aria-label="Zoom out"><ui-icon name="zoomout"></ui-icon></button></div>
      </div>
    </div>
    <footer><button>Keyboard shortcuts</button><span>Map data ©2023 Google</span><a href="#">Terms of Use</a><a href="#">Report a map error</a></footer>
  </div>`);
</script>
</body>
</html>
